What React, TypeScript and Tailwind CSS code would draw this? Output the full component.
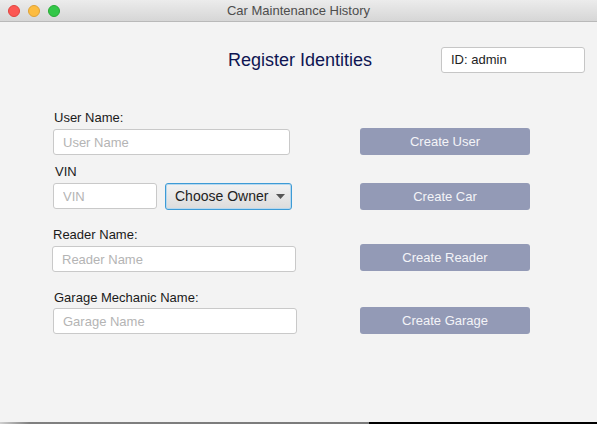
import React from "react"

const font = { fontFamily: '"Liberation Sans", Arial, sans-serif' }

function Field({ label, placeholder, width, labelClass, inputClass }: {
  label: string
  placeholder: string
  width: string
  labelClass?: string
  inputClass?: string
}) {
  return (
    <div className="flex flex-col">
      <div className={`text-[13px] leading-4 text-[#1a1a1a] ${labelClass ?? ""}`}>{label}</div>
      <input
        placeholder={placeholder}
        className={`h-[26px] ${width} rounded-[3px] border border-[#c9c9c9] bg-white px-[9px] text-[13px] text-[#222] placeholder:text-[#b4b4b4] outline-none ${inputClass ?? ""}`}
      />
    </div>
  )
}

function ActionButton({ children, className }: { children: React.ReactNode; className?: string }) {
  return (
    <button className={`h-[27px] w-[170px] rounded-[3px] bg-[#939ab6] text-[13px] text-[#f3f4f8] ${className ?? ""}`}>
      {children}
    </button>
  )
}

export default function App() {
  return (
    <div className="w-[597px] h-[424px] bg-[#f3f3f3] flex flex-col overflow-hidden" style={font}>
      {/* Title bar */}
      <div className="relative h-[22px] shrink-0 border-b border-[#b9b9b9] bg-gradient-to-b from-[#ececec] to-[#d6d6d6] flex items-center">
        <div className="flex gap-[8px] pl-[8px]">
          <span className="w-[12px] h-[12px] rounded-full bg-[#fc5753] border border-[#e0443e]" />
          <span className="w-[12px] h-[12px] rounded-full bg-[#fdbc40] border border-[#dea236]" />
          <span className="w-[12px] h-[12px] rounded-full bg-[#33c748] border border-[#27aa35]" />
        </div>
        <div className="absolute inset-0 flex items-center justify-center text-[13px] text-[#4d4d4d]">
          Car Maintenance History
        </div>
      </div>

      {/* Content */}
      <div className="flex-1 flex flex-col">
        <div className="mt-[25px] flex items-center h-[26px]">
          <div className="ml-[228px] text-[18px] text-[#0e1552]">Register Identities</div>
          <div className="ml-auto mr-[12px] w-[144px] h-[26px] rounded-[3px] border border-[#c6c6c6] bg-white pl-[9px] flex items-center text-[13px] text-[#222]">
            ID: admin
          </div>
        </div>

        <div className="mt-[37px] flex items-end">
          <div className="ml-[53px] w-[307px]">
            <Field label="User Name:" placeholder="User Name" width="w-[237px]" labelClass="ml-[1px] mb-[3px]" />
          </div>
          <ActionButton>Create User</ActionButton>
        </div>

        <div className="mt-[9px] flex items-end">
          <div className="ml-[53px] w-[307px] flex flex-col">
            <div className="ml-[2px] mb-[3px] text-[13px] leading-4 text-[#1a1a1a]">VIN</div>
            <div className="flex items-start">
              <input
                placeholder="VIN"
                className="h-[26px] w-[104px] rounded-[3px] border border-[#c9c9c9] bg-white px-[9px] text-[13px] placeholder:text-[#b4b4b4] outline-none"
              />
              <button className="ml-[8px] h-[27px] w-[127px] rounded-[3px] border border-[#3d9bd6] bg-gradient-to-b from-[#f2f2f2] to-[#dcdcdc] shadow-[inset_0_0_0_1px_#b7d8ee] flex items-center pl-[9px] text-[14px] text-[#222]">
                Choose Owner
                <svg className="ml-[8px]" width="9" height="5" viewBox="0 0 9 5">
                  <path d="M0 0 H9 L4.5 5 Z" fill="#555" />
                </svg>
              </button>
            </div>
          </div>
          <ActionButton>Create Car</ActionButton>
        </div>

        <div className="mt-[17px] flex items-end">
          <div className="ml-[52px] w-[308px]">
            <Field label="Reader Name:" placeholder="Reader Name" width="w-[244px]" labelClass="ml-[1px] mb-[3px]" />
          </div>
          <ActionButton className="mb-[1px]">Create Reader</ActionButton>
        </div>

        <div className="mt-[18px] flex items-end">
          <div className="ml-[53px] w-[307px]">
            <Field label="Garage Mechanic Name:" placeholder="Garage Name" width="w-[244px]" labelClass="ml-[1px] mb-[2px]" />
          </div>
          <ActionButton>Create Garage</ActionButton>
        </div>
      </div>

      {/* bottom edge */}
      <div className="h-[2px] shrink-0 flex">
        <div className="w-[369px] bg-gradient-to-r from-[#d0d0d0] via-[#808080] via-[8%] to-[#7a7a7a]" />
        <div className="flex-1 bg-black" />
      </div>
    </div>
  )
}
